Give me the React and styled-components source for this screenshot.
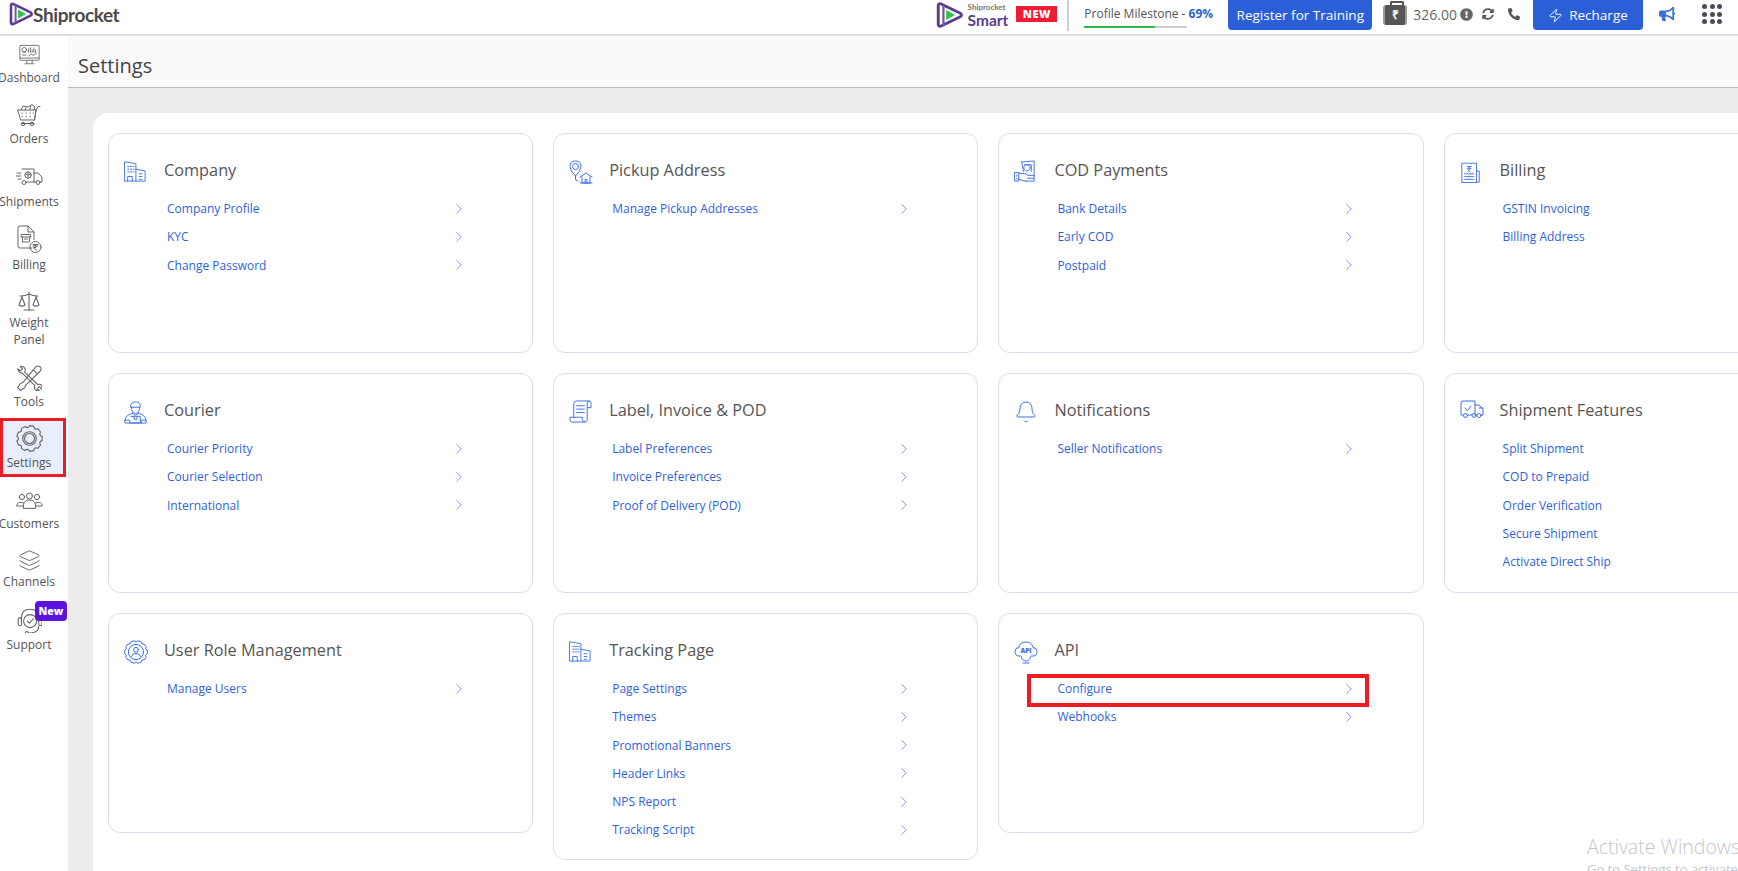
import React from "react";
import styled, { createGlobalStyle } from "styled-components";
import { ChevronRight, Zap, Bell, Layers, Scale } from "lucide-react";
import { FaExclamationCircle, FaSyncAlt, FaPhoneAlt, FaBullhorn } from "react-icons/fa";

const GlobalStyle = createGlobalStyle`
  html, body {
    margin: 0;
    padding: 0;
    height: 100%;
    overflow: hidden;
    background: #fff;
    font-family: "Open Sans", "Liberation Sans", sans-serif;
  }
  * { box-sizing: border-box; }
`;

//icons
const Svg = styled.svg`
  display: block;
  flex: none;
  fill: none;
  stroke: currentColor;
  stroke-width: 1;
  stroke-linecap: round;
  stroke-linejoin: round;
`;

const Icon = ({ w = 24, h = 24, box = "0 0 24 24", children }) => (
  <Svg width={w} height={h} viewBox={box}>{children}</Svg>
);

// scalloped gear outline, used by the settings and user role icons
const gearPath = (c, outer, inner, teeth) => {
  let d = "";
  const step = (Math.PI * 2) / teeth;
  for (let i = 0; i < teeth; i++) {
    const pt = (a, r) => `${(c + Math.cos(a) * r).toFixed(2)} ${(c + Math.sin(a) * r).toFixed(2)}`;
    const a = i * step;
    d += `${i === 0 ? "M" : "L"}${pt(a - step * 0.24, outer)} `;
    d += `L${pt(a + step * 0.24, outer)} `;
    d += `Q${pt(a + step * 0.5, inner * 0.98)} ${pt(a + step * 0.76, outer)} `;
  }
  return d + "Z";
};

const PlayMark = ({ w, h }) => (
  <svg width={w} height={h} viewBox="0 0 24 24" style={{ display: "block", flex: "none" }}>
    <path d="M2 3.5 C2 2 3.4 1.6 4.6 2.2 L21.6 10.4 C23 11.1 23 12.9 21.6 13.6 L4.6 21.8 C3.4 22.4 2 22 2 20.5 Z" fill="none" stroke="#5a3d8f" strokeWidth="2.6" strokeLinejoin="round" />
    <path d="M6.6 3 V21" stroke="#6d5a9c" strokeWidth="2" />
    <path d="M9 7.5 L17 12 L9 16.5 Z" fill="#35c24a" />
  </svg>
);

const DashboardIcon = () => (
  <Icon w={21} h={22}>
    <rect x="1" y="1" width="22" height="17" rx="1" />
    <path d="M1 15.5 H23 M9 18 V21 M15 18 V21 M7 22 H17" />
    <circle cx="6" cy="6" r="2.6" />
    <path d="M5 9 H7 M4 12 H8 M11 5 V9 M13 3.5 V9 M15 6 V9 M17 4 V9 M19 6 V9 M11 13 L14 11 L16 12.5 L20 10" />
  </Icon>
);
const OrdersIcon = () => (
  <Icon w={24} h={24}>
    <path d="M1 7 H19 L17.5 17 H4 Z M5 20.5 H17 M17.5 17 L19 7 L21 3.5 H23" />
    <circle cx="6" cy="21" r="1.8" />
    <circle cx="15" cy="21" r="1.8" />
    <path d="M5 10 h.4 M9 10 h.4 M13 10 h.4 M16 10 h.4 M5 13.5 h.4 M9 13.5 h.4 M13 13.5 h.4 M4 7 L6 3 L11 4 L15 1.5 L18 4 L17 7 M8 7 L9 4.5 M13 7 L13.5 3" />
  </Icon>
);
const ShipmentsIcon = () => (
  <Icon w={27} h={19} box="0 0 27 19">
    <path d="M6 2 H18 V15 H10 M18 6 H22 L26 10 V15 H24 M18 15 H20 M1 6 H5 M0.5 9 H5 M2 12 H5" />
    <circle cx="8" cy="15.5" r="2" />
    <circle cx="22" cy="15.5" r="2" />
    <circle cx="12" cy="8" r="3.2" />
    <path d="M12 5 V11 M9.5 7 L12 8 L14.5 7" />
  </Icon>
);
const BillingIcon = () => (
  <Icon w={25} h={29} box="0 0 25 29">
    <path d="M15 23 H3 Q1 23 1 21 V3 Q1 1 3 1 H11 L17 7 V15 M11 1 V7 H17" />
    <path d="M4.5 9.5 H13.5 V12 H4.5 Z M5.5 12 V17 H12.5 V12 M7.5 14 H10.5" />
    <circle cx="18.5" cy="22" r="5.5" />
    <path d="M16 19.5 H21 M16 21 H21 M17 19.5 Q20 20 19 22.5 H16.5 L20 25.5" />
  </Icon>
);
const ToolsIcon = () => (
  <Icon w={26} h={26}>
    <path d="M3 6.5 L1.5 3.5 L4 5.5 L6 3.5 L4 1.5 Q7.5 .7 8.5 4 Q8.6 5.5 8 6.5 L20 18 Q23 17 24 19.5 Q24.2 21 23.5 22 L21.5 20 L19.5 22 L21.5 23.5 Q18 24.5 17 21 Q16.8 20 17.5 19 L5.5 7.2 Q4 7.5 3 6.5 Z" />
    <path d="M18 2 Q20 0 22.5 1.8 Q24 4 22 6 L9 18.5 L8 21 L4 23.5 L1.5 21 L4 17 L6.5 16 Z M16 4.5 L19.5 8" />
  </Icon>
);
const SettingsIcon = () => (
  <Icon w={27} h={27}>
    <path d={gearPath(12, 11.4, 8.6, 9)} />
    <circle cx="12" cy="12" r="6" />
    <circle cx="12" cy="12" r="4.4" />
  </Icon>
);
const CustomersIcon = () => (
  <Icon w={27} h={17} box="0 0 27 17">
    <circle cx="13.5" cy="4" r="3" />
    <circle cx="6" cy="5" r="2.6" />
    <circle cx="21" cy="5" r="2.6" />
    <path d="M7.5 16 V13 Q8 8 13.5 8 Q19 8 19.5 13 V16 Z M7.5 11 Q1 8.5 .7 14 L7.5 14 M19.5 11 Q26 8.5 26.3 14 L19.5 14" />
  </Icon>
);
const SupportIcon = () => (
  <Icon w={26} h={26}>
    <path d="M5 13 V10 Q5 2 13 2 Q21 2 21 10 V13 M21 18 Q21 23 14 24 H11" />
    <rect x="2" y="10" width="3" height="7" rx="1" />
    <rect x="21" y="10" width="3" height="7" rx="1" />
    <circle cx="13" cy="13" r="6" />
    <path d="M10.5 13 L12.5 15 L16 11" />
    <circle cx="10" cy="24" r="1.4" />
  </Icon>
);

const BuildingIcon = () => (
  <Icon w={22} h={22}>
    <path d="M1 2 L13 4 V23 H1 Z M13 10 L23 12 V23 H13 M4 23 V18 H9 V23" />
    <path d="M4 7 H5.5 M7 7 H8.5 M10 7 H11 M4 10 H5.5 M7 10 H8.5 M10 10 H11 M4 13 H5.5 M7 13 H8.5 M10 13 H11 M16.5 15 H19.5 M16.5 18 H19.5 M16.5 21 H19.5" />
  </Icon>
);
const PickupIcon = () => (
  <Icon w={24} h={24}>
    <path d="M6.5 16 Q1 11 1 6.5 Q1 1 6.5 1 Q12 1 12 6.5 Q12 11 6.5 16 Z M6.5 16 V19 Q6.5 21 9 21" />
    <circle cx="6.5" cy="6.5" r="3" />
    <path d="M11 17 L17 13 L23 17 M13 17 V23 H21 V17 M16 23 V19.5 H18 V23 M11 23 H23" />
  </Icon>
);
const CodIcon = () => (
  <Icon w={23} h={23}>
    <path d="M8 2 L21 1 V22 H12 M8 2 L10 12 M11 5 H18 V12 M17 8 A3.4 3.4 0 1 0 17 8.1" />
    <rect x="1" y="13" width="4" height="9" />
    <path d="M5 14 H11 Q14 14 14 16 H21 M5 20 Q9 22 12 22 M14 19 H21" />
    <path d="M3 15.5 V17 M3 19 V20" />
  </Icon>
);
const ReceiptIcon = () => (
  <Icon w={22} h={24}>
    <path d="M2 23 V2 L4 3 L6 2 L8 3 L10 2 L12 3 L14 2 L16 3 L18 2 V23 Z M18 11 H21 V23 H18" />
    <path d="M5 14 H15 M5 17 H15 M5 20 H15 M8 6 H12 M8 8 H12 M9 6 Q12 7 10 10 H8.5 L11 12" />
  </Icon>
);
const CourierIcon = () => (
  <Icon w={23} h={25}>
    <path d="M7 5 Q7 1 12 1 Q17 1 17 5 V6.5 H7 Z M8 6.5 V9 Q8 13 12 13 Q16 13 16 9 V6.5" />
    <path d="M9 13 Q2 14 1 20 V23 H23 V20 Q22 14 15 13 M9 13 L12 15 L15 13 M1 20 H6 V23 M23 20 H18 V23 M7 16 H17 V23 H7 M10.5 16 V19 H13.5 V16" />
  </Icon>
);
const ScrollIcon = () => (
  <Icon w={23} h={23}>
    <path d="M5 18 V4 Q5 1 8 1 H21 Q23 1 23 4 V8 H19 V4 Q19 1 21 1 M19 8 V20 Q19 23 16.5 23 H3 Q1 23 1 20.5 V18 H14 V20.5 Q14 23 16.5 23" />
    <path d="M8 6 H16 M8 9.5 H16 M8 13 H16" />
  </Icon>
);
const BellIcon = () => <Bell size={24} strokeWidth={1} />;
const TruckCheckIcon = () => (
  <Icon w={24} h={20} box="0 0 24 20">
    <path d="M1 14 V3 Q1 1 3 1 H15 V14 M15 5 H19 L23 9 V15 H21 M15 15 H16.5 M1 15 H3 M8 15 H12" />
    <circle cx="5.5" cy="15.5" r="2" />
    <circle cx="14" cy="15.5" r="2" />
    <circle cx="19" cy="15.5" r="2" />
    <path d="M5 8 L7.5 10.5 L11 6 M19 8 H23" />
  </Icon>
);
const UserRoleIcon = () => (
  <Icon w={24} h={24}>
    <path d={gearPath(12, 11.4, 9, 10)} />
    <circle cx="12" cy="12" r="7.6" />
    <circle cx="12" cy="9.8" r="2.4" />
    <path d="M7.5 16.5 Q8 13.4 12 13.4 Q16 13.4 16.5 16.5" />
  </Icon>
);
const ApiIcon = () => (
  <Icon w={24} h={24}>
    <path d="M6 16 H5 Q1 16 1 11.5 Q1 7.5 5 7.5 Q6 2 12 2 Q18 2 19 7.5 Q23 7.5 23 11.5 Q23 16 19 16 H18" />
    <path d="M7 16 Q8 21 12 21 Q16 21 17 16 M9 23 H15" />
    <text x="12" y="13" textAnchor="middle" fontSize="6.5" fontWeight="800" fontFamily="Open Sans" fill="currentColor" stroke="none">API</text>
  </Icon>
);

const navItems = [
  { label: ["Dashboard"], icon: <DashboardIcon />, box: 27, gap: 5.5 },
  { label: ["Orders"], icon: <OrdersIcon />, box: 29, gap: 15 },
  { label: ["Shipments"], icon: <ShipmentsIcon />, box: 33, gap: 13 },
  { label: ["Billing"], icon: <BillingIcon />, box: 33, gap: 13 },
  { label: ["Weight", "Panel"], icon: <Scale size={24} strokeWidth={1.1} />, box: 25, gap: 16 },
  { label: ["Tools"], icon: <ToolsIcon />, box: 29, gap: 16 },
  { label: ["Settings"], icon: <SettingsIcon />, box: 31, gap: 13, active: true },
  { label: ["Customers"], icon: <CustomersIcon />, box: 29, gap: 15 },
  { label: ["Channels"], icon: <Layers size={23} strokeWidth={1} />, box: 25, gap: 16.5 },
  { label: ["Support"], icon: <SupportIcon />, box: 33, gap: 13, badge: "New" },
];

const cards = [
  { title: "Company", icon: <BuildingIcon />, links: ["Company Profile", "KYC", "Change Password"] },
  { title: "Pickup Address", icon: <PickupIcon />, links: ["Manage Pickup Addresses"] },
  { title: "COD Payments", icon: <CodIcon />, links: ["Bank Details", "Early COD", "Postpaid"] },
  { title: "Billing", icon: <ReceiptIcon />, links: ["GSTIN Invoicing", "Billing Address"] },
  { title: "Courier", icon: <CourierIcon />, links: ["Courier Priority", "Courier Selection", "International"] },
  { title: "Label, Invoice & POD", icon: <ScrollIcon />, links: ["Label Preferences", "Invoice Preferences", "Proof of Delivery (POD)"] },
  { title: "Notifications", icon: <BellIcon />, links: ["Seller Notifications"] },
  { title: "Shipment Features", icon: <TruckCheckIcon />, links: ["Split Shipment", "COD to Prepaid", "Order Verification", "Secure Shipment", "Activate Direct Ship"] },
  { title: "User Role Management", icon: <UserRoleIcon />, links: ["Manage Users"] },
  { title: "Tracking Page", icon: <BuildingIcon />, links: ["Page Settings", "Themes", "Promotional Banners", "Header Links", "NPS Report", "Tracking Script"] },
  { title: "API", icon: <ApiIcon />, links: ["Configure", "Webhooks"], marked: "Configure" },
];

const App = () => {
  return (
    <Page>
      <GlobalStyle />
      <Header>
        <Logo>
          <PlayMark w={24} h={24} />
          <LogoText>Shiprocket</LogoText>
        </Logo>
        <HeaderRight>
          <PlayMark w={27} h={30} />
          <SmartLogo>
            <small>Shiprocket</small>
            <strong>Smart</strong>
          </SmartLogo>
          <NewTag>NEW</NewTag>
          <Divider />
          <Milestone>
            <p>Profile Milestone - <b>69%</b></p>
            <Progress><ProgressFill style={{ width: "69%" }} /></Progress>
          </Milestone>
          <HeaderButton $w={144}>Register for Training</HeaderButton>
          <Wallet>
            <WalletBag><i>₹</i></WalletBag>
            <span>326.00</span>
            <FaExclamationCircle size={13} />
          </Wallet>
          <ToolIcon $ml={9}><FaSyncAlt size={12} /></ToolIcon>
          <ToolIcon $ml={14}><FaPhoneAlt size={12} /></ToolIcon>
          <HeaderButton $w={110} $ml={13}><Zap size={15} strokeWidth={1.5} /> Recharge</HeaderButton>
          <Megaphone><FaBullhorn size={16} /></Megaphone>
          <Dots>{Array.from({ length: 9 }).map((_, i) => <span key={i} />)}</Dots>
        </HeaderRight>
      </Header>
      <Body>
        <Sidebar>
          {navItems.map((item) => (
            <NavItem key={item.label[0]} $gap={item.gap} $active={item.active}>
              <NavIcon $h={item.box}>{item.icon}</NavIcon>
              {item.label.map((line) => <NavLabel key={line}>{line}</NavLabel>)}
              {item.badge && <Badge>{item.badge}</Badge>}
            </NavItem>
          ))}
        </Sidebar>
        <Main>
          <TitleBar>Settings</TitleBar>
          <Content>
            <Panel>
              <CardGrid>
                {cards.map((card) => (
                  <Card key={card.title}>
                    <CardHead>
                      <CardIcon>{card.icon}</CardIcon>
                      <CardTitle>{card.title}</CardTitle>
                    </CardHead>
                    <LinkList>
                      {card.links.map((link) => (
                        <LinkRow key={link} $marked={card.marked === link}>
                          <span>{link}</span>
                          <ChevronRight size={18} strokeWidth={1.2} />
                        </LinkRow>
                      ))}
                    </LinkList>
                  </Card>
                ))}
              </CardGrid>
            </Panel>
          </Content>
        </Main>
      </Body>
      <Watermark>
        <h4>Activate Windows</h4>
        <p>Go to Settings to activate Windows.</p>
      </Watermark>
    </Page>
  );
};

const Page = styled.div`
  position: relative;
  width: 100%;
  height: 100vh;
  overflow: hidden;
  color: #555;
`;

const Header = styled.header`
  height: 36px;
  display: flex;
  align-items: flex-start;
  justify-content: space-between;
  padding: 0 16px 0 9px;
  background: #fff;
  border-bottom: 2px solid #dedede;
`;

const Logo = styled.div`
  display: flex;
  align-items: center;
  height: 28px;
`;

const LogoText = styled.span`
  font-family: Lato, sans-serif;
  font-size: 19px;
  font-weight: 700;
  letter-spacing: -0.4px;
  color: #4a4a4a;
`;

const HeaderRight = styled.div`
  display: flex;
  align-items: flex-start;
  height: 34px;
`;

const SmartLogo = styled.div`
  display: flex;
  flex-direction: column;
  align-items: flex-start;
  margin-left: 5px;
  line-height: 1;
  small {
    font-family: Lato, sans-serif;
    font-size: 8px;
    font-weight: 700;
    color: #777;
    margin-top: 3px;
  }
  strong {
    font-family: Lato, sans-serif;
    font-size: 15.5px;
    font-weight: 700;
    color: #5a3d8f;
    margin-top: 2px;
  }
`;

const NewTag = styled.span`
  width: 41px;
  height: 16px;
  margin: 6px 0 0 8px;
  background: #ee1c34;
  color: #fff;
  font-size: 11px;
  font-weight: 800;
  line-height: 16px;
  text-align: center;
  letter-spacing: 0.5px;
`;

const Divider = styled.div`
  width: 2px;
  height: 31px;
  margin-left: 10px;
  background: #cfcfcf;
`;

const Milestone = styled.div`
  width: 144px;
  margin-left: 15px;
  p {
    margin: 5px 0 0;
    font-size: 12px;
    line-height: 17px;
    color: #555;
    white-space: nowrap;
  }
  b {
    color: #2a5fd8;
    font-weight: 700;
  }
`;

const Progress = styled.div`
  width: 103px;
  height: 2px;
  margin-top: 4px;
  background: #ccc;
`;

const ProgressFill = styled.div`
  height: 100%;
  background: #2fb84a;
`;

const HeaderButton = styled.button`
  width: ${(p) => p.$w}px;
  height: 30px;
  margin-left: ${(p) => p.$ml || 0}px;
  padding: 0;
  display: flex;
  align-items: center;
  justify-content: center;
  gap: 6px;
  border: 0;
  border-radius: 0 0 4px 4px;
  background: #2a5fd8;
  color: #fff;
  font-family: "Open Sans", sans-serif;
  font-size: 13.5px;
`;

const Wallet = styled.div`
  display: flex;
  align-items: center;
  height: 28px;
  margin-left: 11px;
  color: #666;
  font-size: 14px;
  span { margin: 0 3px 0 6px; }
`;

const WalletBag = styled.div`
  position: relative;
  width: 24px;
  height: 20px;
  margin-top: 2px;
  border-radius: 3px;
  background: #555;
  border-left: 2px solid #999;
  border-right: 2px solid #999;
  display: flex;
  align-items: center;
  justify-content: center;
  &::before {
    content: "";
    position: absolute;
    top: -4px;
    left: 5px;
    width: 10px;
    height: 4px;
    border: 2px solid #555;
    border-bottom: 0;
    border-radius: 2px 2px 0 0;
  }
  i {
    color: #fff;
    font-style: normal;
    font-size: 12px;
    font-weight: 700;
    line-height: 1;
  }
`;

const ToolIcon = styled.div`
  height: 28px;
  display: flex;
  align-items: center;
  margin-left: ${(p) => p.$ml}px;
  color: #555;
`;

const Megaphone = styled.div`
  height: 28px;
  display: flex;
  align-items: center;
  margin-left: 16px;
  color: #3a6fe0;
`;

const Dots = styled.div`
  display: grid;
  grid-template-columns: repeat(3, 5px);
  gap: 2.5px;
  margin: 4px 0 0 27px;
  span {
    width: 5px;
    height: 5px;
    border-radius: 50%;
    background: #4f4a5c;
  }
`;

const Body = styled.div`
  display: flex;
  height: calc(100vh - 36px);
`;

const Sidebar = styled.nav`
  flex: none;
  width: 68px;
  background: #fff;
`;

const NavItem = styled.div`
  position: relative;
  z-index: 0;
  display: flex;
  flex-direction: column;
  align-items: center;
  width: 66px;
  padding-right: 8px;
  margin-top: ${(p) => p.$gap}px;
  ${(p) => p.$active && `
    &::before {
      content: "";
      position: absolute;
      z-index: -1;
      top: -4.5px;
      bottom: -6.5px;
      left: 0;
      right: 0;
      background: #e8eefc;
      border: 3px solid #ed1c24;
    }
  `}
`;

const NavIcon = styled.div`
  height: ${(p) => p.$h}px;
  display: flex;
  align-items: center;
  justify-content: center;
  color: #666;
`;

const NavLabel = styled.span`
  font-size: 12px;
  line-height: 17px;
  color: #555;
  white-space: nowrap;
`;

const Badge = styled.span`
  position: absolute;
  top: -2.5px;
  left: 35px;
  width: 32px;
  height: 20px;
  border-radius: 4px;
  background: #5b14e0;
  color: #fff;
  font-size: 10.5px;
  font-weight: 800;
  line-height: 20px;
  text-align: center;
`;

const Main = styled.main`
  flex: 1;
  min-width: 0;
  display: flex;
  flex-direction: column;
  overflow: hidden;
`;

const TitleBar = styled.div`
  flex: none;
  height: 52px;
  padding: 16px 0 0 10px;
  background: #fafafa;
  border-bottom: 1px solid #bdbdbd;
  font-size: 20px;
  line-height: 27px;
  color: #444;
`;

const Content = styled.div`
  flex: 1;
  min-height: 0;
  padding: 25px 0 0 25px;
  background: #ececec;
`;

const Panel = styled.div`
  height: 100%;
  padding: 20px 15px;
  border-radius: 16px 0 0 0;
  background: #fff;
  overflow: hidden;
`;

const CardGrid = styled.div`
  display: grid;
  grid-template-columns: repeat(4, 425.2px);
  column-gap: 20px;
  row-gap: 20px;
  align-items: start;
`;

const Card = styled.section`
  min-height: 220px;
  padding: 16px 15px 15px;
  border: 1px solid #dcdcee;
  border-radius: 12px;
  background: #fff;
`;

const CardHead = styled.div`
  display: flex;
  align-items: center;
  height: 40px;
  gap: 16px;
`;

const CardIcon = styled.div`
  flex: none;
  width: 24px;
  height: 24px;
  margin-top: 4px;
  color: #3f6fe0;
`;

const CardTitle = styled.h3`
  margin: 0;
  font-size: 16.3px;
  font-weight: 400;
  line-height: 24px;
  color: #555;
  white-space: nowrap;
`;

const LinkList = styled.ul`
  list-style: none;
  width: 301px;
  margin: 4.5px 0 0 43px;
  padding: 0;
`;

const LinkRow = styled.li`
  position: relative;
  display: flex;
  align-items: center;
  justify-content: space-between;
  height: 28.25px;
  font-size: 12px;
  color: #2f5fd8;
  svg { color: #6e8fe0; flex: none; }
  ${(p) => p.$marked && `
    &::after {
      content: "";
      position: absolute;
      top: -1px;
      bottom: -4px;
      left: -30px;
      right: -11px;
      border: 4px solid #ed1c24;
    }
  `}
`;

const Watermark = styled.div`
  position: absolute;
  left: 1587px;
  top: 834px;
  width: 300px;
  color: #c6c6c6;
  h4 {
    margin: 0;
    font-size: 19.5px;
    font-weight: 300;
    line-height: 26px;
  }
  p {
    margin: 0;
    font-size: 13px;
    line-height: 18px;
  }
`;

export default App;
